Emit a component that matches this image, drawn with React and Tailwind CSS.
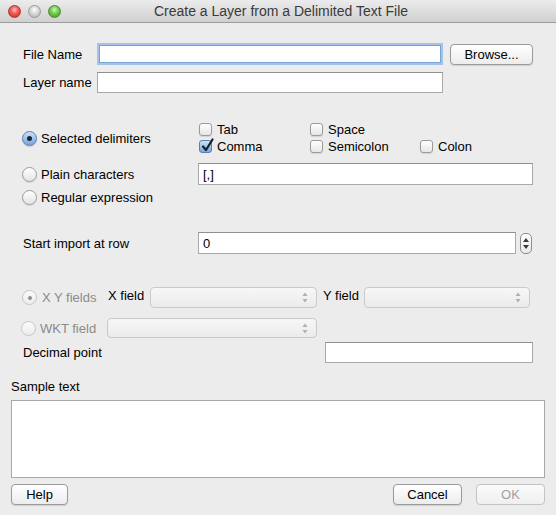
import React from "react";

function Light({ color }) {
  const cls =
    color === "red"
      ? "bg-[radial-gradient(circle_at_50%_35%,#ffc2bd_0%,#f0554f_45%,#c42a22_100%)] border-[#a8382f]"
      : color === "green"
      ? "bg-[radial-gradient(circle_at_50%_35%,#d6f7b8_0%,#6cc94a_45%,#3e9a22_100%)] border-[#4d8a34]"
      : "bg-[radial-gradient(circle_at_50%_35%,#ffffff_0%,#d6d6d6_45%,#a9a9a9_100%)] border-[#9a9a9a]";
  return <span className={`block h-[13px] w-[13px] rounded-full border ${cls}`} />;
}

function Radio({ state }) {
  if (state === "on") {
    return (
      <span className="flex h-[15px] w-[15px] shrink-0 items-center justify-center rounded-full border border-[#5b7fae] bg-linear-to-b from-[#cfe2f7] to-[#70a5df] shadow-[0_1px_1px_rgba(0,0,0,0.15)]">
        <span className="block h-[5px] w-[5px] rounded-full bg-[#1c2633]" />
      </span>
    );
  }
  if (state === "disabledOn") {
    return (
      <span className="flex h-[15px] w-[15px] shrink-0 items-center justify-center rounded-full border border-[#c6c6c6] bg-linear-to-b from-[#fbfbfb] to-[#ececec]">
        <span className="block h-[4px] w-[4px] rounded-full bg-[#8e8e8e]" />
      </span>
    );
  }
  if (state === "disabled") {
    return (
      <span className="block h-[15px] w-[15px] shrink-0 rounded-full border border-[#c6c6c6] bg-linear-to-b from-[#fbfbfb] to-[#ececec]" />
    );
  }
  return (
    <span className="block h-[15px] w-[15px] shrink-0 rounded-full border border-[#9b9b9b] bg-linear-to-b from-white to-[#e4e4e4] shadow-[0_1px_1px_rgba(0,0,0,0.1)]" />
  );
}

function Checkbox({ checked, label }) {
  return (
    <div className="flex h-[17px] items-center gap-[5px]">
      {checked ? (
        <span className="relative block h-[13px] w-[13px] shrink-0 rounded-[3px] border border-[#5b7fae] bg-linear-to-b from-[#cfe2f7] to-[#76a8e0]">
          <svg className="absolute left-[1px] top-[-3px]" width="13" height="15" viewBox="0 0 13 15">
            <path d="M2 8.5 L5 12 L11.5 1.5" fill="none" stroke="#1b2028" strokeWidth="2.2" strokeLinecap="round" strokeLinejoin="round" />
          </svg>
        </span>
      ) : (
        <span className="block h-[13px] w-[13px] shrink-0 rounded-[3px] border border-[#9b9b9b] bg-linear-to-b from-white to-[#e6e6e6] shadow-[0_1px_1px_rgba(0,0,0,0.1)]" />
      )}
      <span className="leading-none">{label}</span>
    </div>
  );
}

function Field({ className, children }) {
  return (
    <div className={`flex items-center border border-[#a9a9a9] border-t-[#8f8f8f] bg-white px-[4px] leading-none ${className}`}>
      {children}
    </div>
  );
}

function Combo({ className }) {
  return (
    <div className={`flex items-center justify-end rounded-[4px] border border-[#cacaca] bg-linear-to-b from-[#f7f7f7] to-[#ebebeb] pr-[8px] ${className}`}>
      <svg width="6" height="11" viewBox="0 0 6 11">
        <path d="M3 0.5 L5.5 4 L0.5 4 Z" fill="#b0b0b0" />
        <path d="M3 10.5 L5.5 7 L0.5 7 Z" fill="#b0b0b0" />
      </svg>
    </div>
  );
}

function Button({ className, children, disabled }) {
  return (
    <div
      className={
        disabled
          ? `flex items-center justify-center rounded-[4px] border border-[#c4c4c4] bg-linear-to-b from-[#fbfbfb] to-[#efefef] text-[#a0a0a0] leading-none ${className}`
          : `flex items-center justify-center rounded-[4px] border border-[#9a9a9a] bg-linear-to-b from-white to-[#ececec] shadow-[0_1px_1px_rgba(0,0,0,0.12)] leading-none ${className}`
      }
    >
      {children}
    </div>
  );
}

export default function App() {
  return (
    <div className="flex h-[515px] w-[556px] flex-col overflow-hidden bg-[#ececec] font-['Liberation_Sans',Arial,sans-serif] text-[13px] text-black">
      {/* Title bar */}
      <div className="relative flex h-[23px] shrink-0 items-center border-b border-[#9c9c9c] bg-linear-to-b from-[#ececec] to-[#d0d0d0]">
        <div className="flex items-center gap-[7px] pl-[8px]">
          <Light color="red" />
          <Light color="gray" />
          <Light color="green" />
        </div>
        <div className="flex-1 pr-[55px] text-center text-[14px] leading-none text-[#3a3a3a]">
          Create a Layer from a Delimited Text File
        </div>
      </div>

      <div className="flex flex-col">
        {/* File Name */}
        <div className="mt-[20px] flex h-[22px] items-center">
          <span className="ml-[23px] w-[74px] leading-none">File Name</span>
          <div className="h-[22px] w-[346px] border-2 border-[#a3c3ea] bg-white shadow-[inset_0_0_0_1px_#7aa2d6]" />
          <Button className="ml-[7px] h-[21px] w-[83px]">Browse...</Button>
        </div>

        {/* Layer name */}
        <div className="mt-[7px] flex h-[21px] items-center">
          <span className="ml-[23px] w-[74px] leading-none">Layer name</span>
          <Field className="h-[21px] w-[346px]" />
        </div>

        {/* Selected delimiters */}
        <div className="mt-[28px] flex h-[34px]">
          <div className="ml-[22px] flex w-[177px] items-center gap-[4px]">
            <Radio state="on" />
            <span className="leading-none">Selected delimiters</span>
          </div>
          <div className="grid grid-cols-[111px_110px_auto] grid-rows-[17px_17px]">
            <Checkbox label="Tab" />
            <Checkbox label="Space" />
            <div />
            <Checkbox label="Comma" checked />
            <Checkbox label="Semicolon" />
            <Checkbox label="Colon" />
          </div>
        </div>

        {/* Plain characters */}
        <div className="mt-[8px] flex h-[22px] items-center">
          <div className="ml-[22px] flex w-[176px] items-center gap-[4px]">
            <Radio state="off" />
            <span className="leading-none">Plain characters</span>
          </div>
          <Field className="h-[22px] w-[335px]">[,]</Field>
        </div>

        {/* Regular expression */}
        <div className="mt-[1px] flex h-[22px] items-center">
          <div className="ml-[22px] flex items-center gap-[4px]">
            <Radio state="off" />
            <span className="leading-none">Regular expression</span>
          </div>
        </div>

        {/* Start import at row */}
        <div className="mt-[24px] flex h-[22px] items-center">
          <span className="ml-[23px] w-[175px] leading-none">Start import at row</span>
          <Field className="h-[22px] w-[318px]">0</Field>
          <div className="ml-[4px] flex h-[21px] w-[12px] flex-col items-center justify-center gap-[3px] rounded-[5px] border border-[#8e8e8e] bg-linear-to-b from-white to-[#e8e8e8]">
            <svg width="6" height="4" viewBox="0 0 6 4">
              <path d="M3 0 L6 4 L0 4 Z" fill="#3a3a3a" />
            </svg>
            <svg width="6" height="4" viewBox="0 0 6 4">
              <path d="M3 4 L6 0 L0 0 Z" fill="#3a3a3a" />
            </svg>
          </div>
        </div>

        {/* X Y fields */}
        <div className="mt-[33px] flex h-[21px] items-center">
          <div className="ml-[22px] flex w-[86px] items-center gap-[5px]">
            <Radio state="disabledOn" />
            <span className="leading-none text-[#8a8a8a]">X Y fields</span>
          </div>
          <span className="mb-[4px] w-[42px] leading-none">X field</span>
          <Combo className="h-[21px] w-[167px]" />
          <span className="mb-[4px] ml-[6px] w-[41px] leading-none">Y field</span>
          <Combo className="h-[21px] w-[166px]" />
        </div>

        {/* WKT field */}
        <div className="mt-[10px] flex h-[20px] items-center">
          <div className="ml-[21px] flex w-[86px] items-center gap-[4px]">
            <Radio state="disabled" />
            <span className="leading-none text-[#8a8a8a]">WKT field</span>
          </div>
          <Combo className="h-[20px] w-[210px]" />
        </div>

        {/* Decimal point */}
        <div className="mt-[4px] flex h-[21px] items-center">
          <span className="ml-[23px] w-[302px] leading-none">Decimal point</span>
          <Field className="h-[21px] w-[208px]" />
        </div>

        {/* Sample text */}
        <div className="mt-[15px] flex h-[16px] items-center">
          <span className="ml-[11px] leading-none">Sample text</span>
        </div>
        <div className="ml-[11px] mt-[6px] h-[78px] w-[534px] border border-[#a9a9a9] bg-white" />

        {/* Buttons */}
        <div className="mt-[6px] flex h-[21px] items-center">
          <Button className="ml-[11px] h-[21px] w-[57px]">Help</Button>
          <div className="flex-1" />
          <Button className="h-[21px] w-[69px]">Cancel</Button>
          <Button disabled className="ml-[14px] mr-[11px] h-[21px] w-[69px]">OK</Button>
        </div>
      </div>
    </div>
  );
}
